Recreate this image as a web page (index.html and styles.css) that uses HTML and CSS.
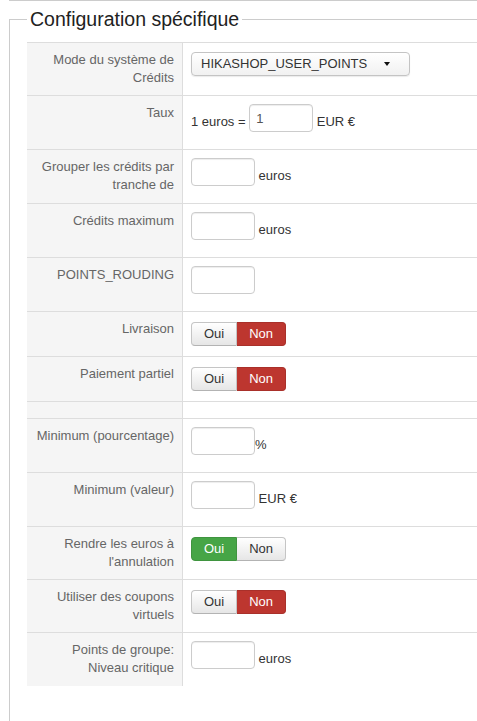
FILE: index.html
```html
<!DOCTYPE html>
<html lang="fr">
<head>
<meta charset="utf-8">
<title>Configuration spécifique</title>
<link rel="stylesheet" href="styles.css">
</head>
<body>
<div class="page">
  <div class="topline"></div>
  <fieldset class="cfg">
    <legend>Configuration spécifique</legend>
    <table class="admintable">
      <tr>
        <td class="key">Mode du système de Crédits</td>
        <td class="val"><div class="select"><span class="select-text">HIKASHOP_USER_POINTS</span><span class="caret"></span></div></td>
      </tr>
      <tr>
        <td class="key">Taux</td>
        <td class="val">1 euros = <input class="inp" type="text" value="1"> EUR €</td>
      </tr>
      <tr>
        <td class="key">Grouper les crédits par tranche de</td>
        <td class="val"><input class="inp" type="text" value=""> euros</td>
      </tr>
      <tr>
        <td class="key">Crédits maximum</td>
        <td class="val"><input class="inp" type="text" value=""> euros</td>
      </tr>
      <tr>
        <td class="key">POINTS_ROUDING</td>
        <td class="val"><input class="inp" type="text" value=""></td>
      </tr>
      <tr>
        <td class="key">Livraison</td>
        <td class="val"><div class="toggle"><span class="btn">Oui</span><span class="btn btn-no">Non</span></div></td>
      </tr>
      <tr>
        <td class="key">Paiement partiel</td>
        <td class="val"><div class="toggle"><span class="btn">Oui</span><span class="btn btn-no">Non</span></div></td>
      </tr>
      <tr>
        <td class="key"></td>
        <td class="val"></td>
      </tr>
      <tr>
        <td class="key">Minimum (pourcentage)</td>
        <td class="val"><input class="inp" type="text" value="">%</td>
      </tr>
      <tr>
        <td class="key">Minimum (valeur)</td>
        <td class="val"><input class="inp" type="text" value=""> EUR €</td>
      </tr>
      <tr>
        <td class="key">Rendre les euros à l'annulation</td>
        <td class="val"><div class="toggle"><span class="btn btn-yes">Oui</span><span class="btn">Non</span></div></td>
      </tr>
      <tr>
        <td class="key">Utiliser des coupons virtuels</td>
        <td class="val"><div class="toggle"><span class="btn">Oui</span><span class="btn btn-no">Non</span></div></td>
      </tr>
      <tr>
        <td class="key">Points de groupe: Niveau critique</td>
        <td class="val"><input class="inp" type="text" value=""> euros</td>
      </tr>
    </table>
  </fieldset>
</div>
</body>
</html>
```

FILE: styles.css
```css
html, body {
  margin: 0;
  padding: 0;
  background: #fff;
  overflow: hidden;
}

body {
  font-family: "Liberation Sans", Arial, sans-serif;
  font-size: 13px;
  line-height: 18px;
  color: #333;
}

.page {
  width: 477px;
  height: 721px;
  overflow: hidden;
}

.topline {
  width: 540px;
  margin-left: 9px;
  height: 0;
  border-top: 1px solid #ccc;
}

.cfg {
  box-sizing: border-box;
  width: 540px;
  margin: 6px 0 0 9px;
  padding: 11px 0 60px 17px;
  border: 1px solid #ccc;
  min-width: 0;
}

.cfg legend {
  margin: 0;
  padding: 0 3px;
  font-size: 19.5px;
  line-height: 24px;
  color: #222;
  font-weight: normal;
}

.admintable {
  width: 100%;
  border-collapse: separate;
  border-spacing: 0;
}

.admintable td {
  border-top: 1px solid #ddd;
  padding: 8px;
  vertical-align: top;
}

.admintable td.key {
  width: 139px;
  background: #f5f5f5;
  border-right: 1px solid #ddd;
  text-align: right;
  color: #666;
}

.admintable td.val {
  color: #333;
}

.inp {
  display: inline-block;
  box-sizing: border-box;
  width: 64px;
  height: 28px;
  margin: 0 0 9px 0;
  padding: 4px 6px;
  border: 1px solid #ccc;
  border-radius: 4px;
  box-shadow: inset 0 1px 1px rgba(0, 0, 0, 0.075);
  font-family: "Liberation Sans", Arial, sans-serif;
  font-size: 13px;
  line-height: 18px;
  color: #555;
  vertical-align: middle;
  background: #fff;
}

.select {
  display: inline-flex;
  align-items: center;
  justify-content: space-between;
  box-sizing: border-box;
  width: 219px;
  height: 24px;
  margin-top: 1px;
  padding: 0 19px 0 9px;
  border: 1px solid #c4c4c4;
  border-radius: 4px;
  background: linear-gradient(#ffffff, #f1f1f1);
  box-shadow: 0 1px 1px rgba(0, 0, 0, 0.08);
  vertical-align: top;
  color: #333;
}

.caret {
  width: 0;
  height: 0;
  border-top: 4px solid #111;
  border-left: 3px solid transparent;
  border-right: 3px solid transparent;
}

.toggle {
  display: inline-flex;
  margin: 2px 0;
  vertical-align: top;
}

.btn {
  box-sizing: border-box;
  height: 24px;
  padding: 0 12px;
  line-height: 22px;
  border: 1px solid #c5c5c5;
  border-bottom-color: #b3b3b3;
  background: linear-gradient(#ffffff, #e6e6e6);
  color: #333;
  font-size: 13px;
}

.btn:first-child {
  border-radius: 4px 0 0 4px;
}

.btn:last-child {
  border-radius: 0 4px 4px 0;
  border-left: 0;
}

.btn-no {
  background: #bd362f;
  border-color: #a9302a;
  color: #fff;
}

.btn-yes {
  background: #46a546;
  border-color: #3f943f;
  color: #fff;
}
```
